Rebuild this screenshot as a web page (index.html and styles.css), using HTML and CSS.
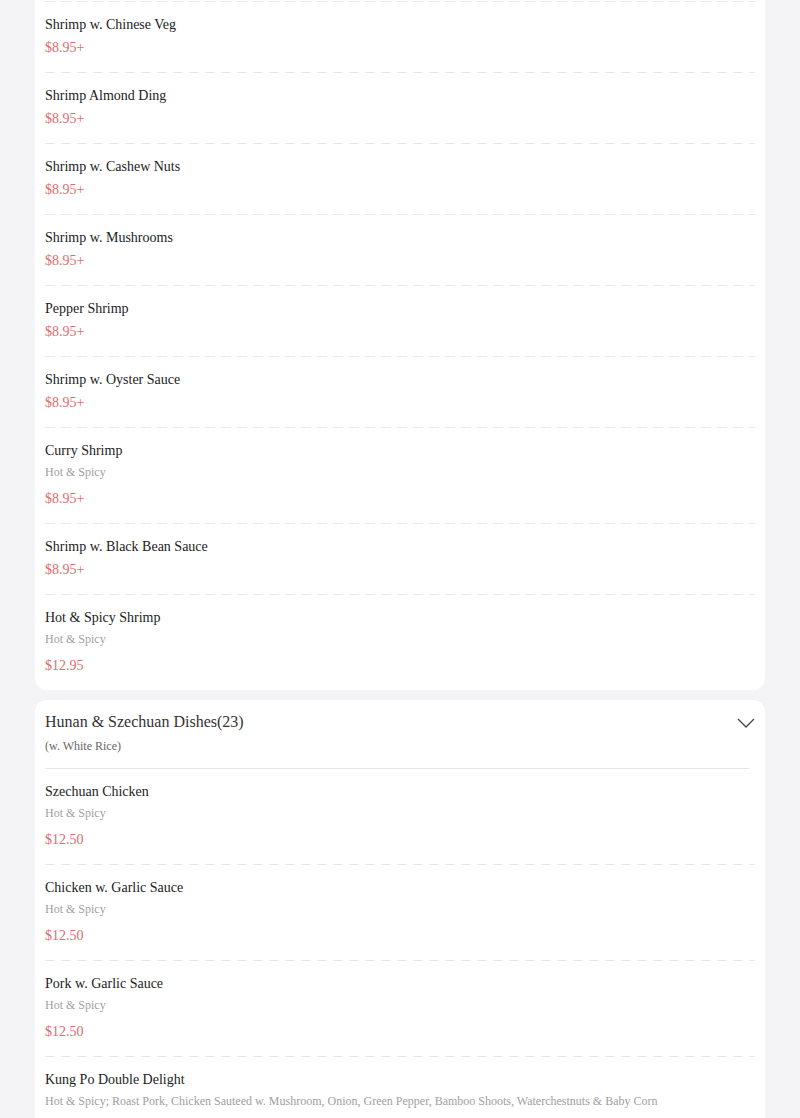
FILE: index.html
```html
<!DOCTYPE html>
<html>
<head>
<meta charset="utf-8">
<link rel="stylesheet" href="styles.css">
</head>
<body>
<div class="page">
  <section class="card card-cont">
    <div class="item"><div class="name">Shrimp w. Chinese Veg</div><div class="price">$8.95+</div></div>
    <div class="item"><div class="name">Shrimp Almond Ding</div><div class="price">$8.95+</div></div>
    <div class="item"><div class="name">Shrimp w. Cashew Nuts</div><div class="price">$8.95+</div></div>
    <div class="item"><div class="name">Shrimp w. Mushrooms</div><div class="price">$8.95+</div></div>
    <div class="item"><div class="name">Pepper Shrimp</div><div class="price">$8.95+</div></div>
    <div class="item"><div class="name">Shrimp w. Oyster Sauce</div><div class="price">$8.95+</div></div>
    <div class="item"><div class="name">Curry Shrimp</div><div class="desc">Hot &amp; Spicy</div><div class="price">$8.95+</div></div>
    <div class="item"><div class="name">Shrimp w. Black Bean Sauce</div><div class="price">$8.95+</div></div>
    <div class="item"><div class="name">Hot &amp; Spicy Shrimp</div><div class="desc">Hot &amp; Spicy</div><div class="price">$12.95</div></div>
  </section>
  <section class="card">
    <header class="cat-head">
      <div class="cat-text">
        <div class="cat-title">Hunan &amp; Szechuan Dishes(23)</div>
        <div class="cat-sub">(w. White Rice)</div>
      </div>
      <svg class="chev" width="18" height="10" viewBox="0 0 18 10"><path d="M1 1 L9 9 L17 1" fill="none" stroke="#444" stroke-width="1.3"/></svg>
    </header>
    <div class="item first"><div class="name">Szechuan Chicken</div><div class="desc">Hot &amp; Spicy</div><div class="price">$12.50</div></div>
    <div class="item"><div class="name">Chicken w. Garlic Sauce</div><div class="desc">Hot &amp; Spicy</div><div class="price">$12.50</div></div>
    <div class="item"><div class="name">Pork w. Garlic Sauce</div><div class="desc">Hot &amp; Spicy</div><div class="price">$12.50</div></div>
    <div class="item"><div class="name">Kung Po Double Delight</div><div class="desc">Hot &amp; Spicy; Roast Pork, Chicken Sauteed w. Mushroom, Onion, Green Pepper, Bamboo Shoots, Waterchestnuts &amp; Baby Corn</div><div class="price">$12.50</div></div>
  </section>
</div>
</body>
</html>
```
FILE: styles.css
```css
html, body {
  margin: 0;
  padding: 0;
  background: #f4f4f6;
  font-family: "Liberation Serif", "Times New Roman", serif;
}
.page {
  display: flex;
  flex-direction: column;
  gap: 10px;
  padding: 0 35px;
  height: 1118px;
  overflow: hidden;
}
.card {
  background: #fff;
  border-radius: 12px;
  padding: 0 10px;
  flex-shrink: 0;
}
.card-cont {
  border-radius: 0 0 12px 12px;
  padding-top: 1px;
}
.item {
  background-image: linear-gradient(to right, #e8e8e8 10px, transparent 10px);
  background-size: 16px 1px;
  background-repeat: repeat-x;
  background-position: 0 0;
  padding: 14px 0 14px;
}
.item.first {
  background: none;
  padding-top: 13px;
}
.card-cont .item:last-child {
  padding-bottom: 14px;
}
.name {
  font-size: 14px;
  line-height: 20px;
  color: #222;
}
.desc {
  font-size: 12px;
  line-height: 18px;
  color: #a0a0a0;
  margin-top: 2px;
  margin-bottom: 8px;
}
.price {
  font-size: 14px;
  line-height: 20px;
  color: #e06b6b;
  margin-top: 3px;
}
.cat-head {
  display: flex;
  justify-content: space-between;
  align-items: flex-start;
  padding: 11px 0 13px;
  margin-right: 6px;
  border-bottom: 1px solid #e6e6e6;
}
.cat-title {
  font-size: 16px;
  line-height: 22px;
  color: #333;
}
.cat-sub {
  font-size: 12px;
  line-height: 18px;
  color: #666;
  margin-top: 4px;
}
.chev {
  margin-top: 7px;
  margin-right: -6px;
}
```
